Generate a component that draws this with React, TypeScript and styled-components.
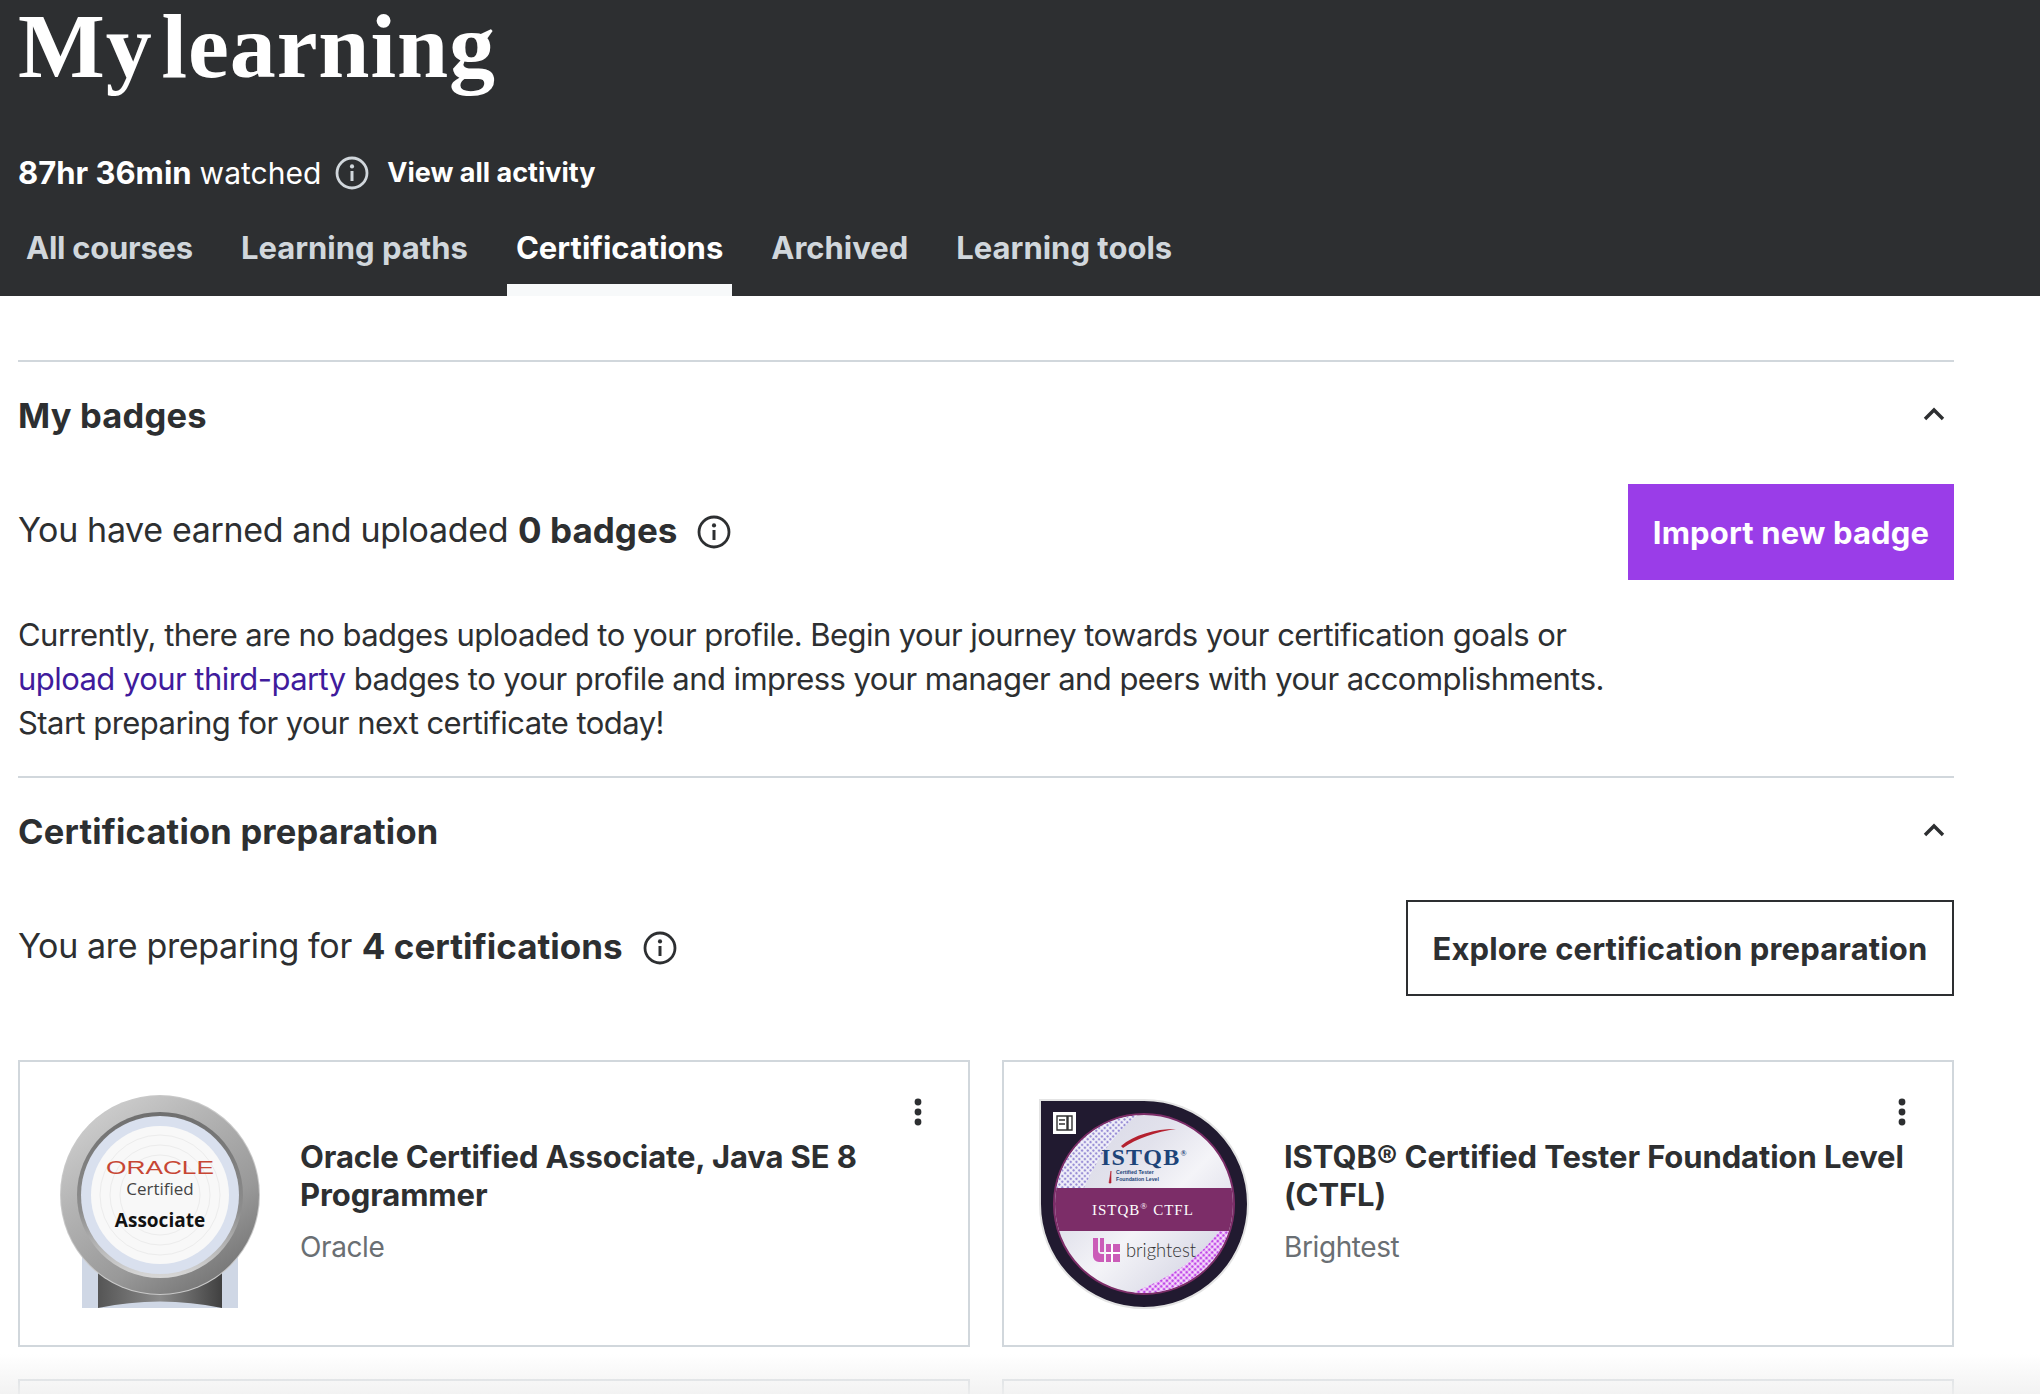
import React from "react";
import styled, { createGlobalStyle } from "styled-components";

const Global = createGlobalStyle`
  html, body { margin: 0; padding: 0; height: 100%; overflow: hidden; background: #fff; }
  body { font-family: Inter, "Liberation Sans", sans-serif; color: #2d2f31; }
  * { box-sizing: border-box; }
`;

const Page = styled.div`height: 1394px; overflow: hidden; position: relative;`;
const Hero = styled.header`background: #2d2f31; height: 296px; padding: 0 18px; color: #fff; display: flex; flex-direction: column;`;
const Title = styled.h1`margin: 0; height: 113px; font: 700 92px/92px "Liberation Serif", serif; letter-spacing: 0.9px; word-spacing: -15px;`;
const Stats = styled.div`margin-top: 43px; height: 34px; display: flex; align-items: center; font-size: 31px; line-height: 34px; color: #fff;`;
const Strong = styled.strong`font-weight: 700;`;
const Watched = styled.span`font-weight: 400; font-size: 30px; margin-left: 8px;`;
const Activity = styled.a`font-size: 27px; font-weight: 700; margin-left: 18px;`;
const Info = styled.svg<{ $gap: number }>`width: 34px; height: 34px; margin-left: ${p => p.$gap}px; flex: none;`;
const Tabs = styled.nav`margin: auto 0 0 -1px; display: flex; gap: 30px;`;
const Tab = styled.a<{ $active?: boolean }>`
  height: 68px; padding: 0 9px; font-size: 31px; font-weight: 700; line-height: 40px;
  color: ${p => (p.$active ? "#fff" : "#d1d7dc")};
  border-bottom: 12px solid ${p => (p.$active ? "#f7f9fa" : "transparent")};
  &:first-child { letter-spacing: -0.25px; }
`;
const Main = styled.main`margin: 0 86px 0 18px; padding-top: 64px;`;
const Section = styled.section`border-top: 2px solid #d1d7dc;`;
const SectionHead = styled.div`height: 122px; padding-bottom: 15px; display: flex; align-items: center; justify-content: space-between;`;
const SectionTitle = styled.h2`margin: 0; font-size: 34.5px; font-weight: 700; line-height: 44px; letter-spacing: 0.2px;`;
const Chevron = styled.svg`width: 24px; height: 24px; margin-right: 8px; margin-top: -5px;`;
const Summary = styled.div`display: flex; align-items: center; justify-content: space-between; height: 96px;`;
const SummaryText = styled.div`display: flex; align-items: center; font-size: 34px; line-height: 44px; letter-spacing: -0.35px;`;
const SummaryLabel = styled.span`display: flex; margin-top: -5px;`;
const SummaryStrong = styled.strong`font-size: 35px; font-weight: 700; letter-spacing: 0; margin-left: 10px;`;
const Primary = styled.button`
  height: 96px; width: 326px; border: 0; background: #9a3de8; color: #fff;
  font: 700 31px Inter, sans-serif; letter-spacing: 0.15px; padding: 0;
`;
const Secondary = styled.button`
  height: 96px; width: 548px; border: 2px solid #2d2f31; background: #fff; color: #2d2f31;
  font: 700 31px Inter, sans-serif; letter-spacing: 0.15px; padding: 0;
`;
const Body = styled.p`margin: 33px 0 0; height: 163px; font-size: 31px; line-height: 44px; letter-spacing: -0.55px;`;
const Link = styled.a`color: #401b9c;`;
const Cards = styled.div`display: grid; grid-template-columns: 1fr 1fr; gap: 32px; margin-top: 64px;`;
const Card = styled.article`
  position: relative; height: 287px; border: 2px solid #d1d7dc; padding: 0 24px 0 30px;
  display: flex; align-items: center; gap: 30px; background: #fff;
`;
const Badge = styled.svg`width: 220px; height: 220px; flex: none;`;
const CardBody = styled.div`display: flex; flex-direction: column; margin-top: -4px;`;
const CardTitle = styled.h3`margin: 0; font-size: 31px; font-weight: 700; line-height: 38px; letter-spacing: -0.1px;`;
const CardSub = styled.div`margin-top: 14px; font-size: 28px; line-height: 38px; letter-spacing: -0.4px; color: #6a6f73;`;
const Dots = styled.svg`position: absolute; right: 45px; top: 34px; width: 10px; height: 32px;`;
const Fade = styled.div`
  position: absolute; left: 0; right: 0; bottom: 0; height: 40px;
  background: linear-gradient(rgba(240,240,240,0), rgba(240,240,240,.85));
`;

const InfoIcon = ({ gap, color = "currentColor" }: { gap: number; color?: string }) => (
  <Info $gap={gap} viewBox="0 0 34 34" fill="none">
    <circle cx="17" cy="17" r="15" stroke={color} strokeWidth="2.8" />
    <circle cx="17" cy="10.4" r="2.1" fill={color} />
    <path d="M17 15v10" stroke={color} strokeWidth="3" />
  </Info>
);

const Up = () => (
  <Chevron viewBox="0 0 24 24" fill="none">
    <path d="M3 18L12 9l9 9" stroke="#2d2f31" strokeWidth="3.4" />
  </Chevron>
);

const More = () => (
  <Dots viewBox="0 0 10 32" fill="#2d2f31">
    <circle cx="5" cy="6" r="3.4" />
    <circle cx="5" cy="16" r="3.4" />
    <circle cx="5" cy="26" r="3.4" />
  </Dots>
);

const OracleBadge = () => (
  <Badge viewBox="0 0 220 220">
    <defs>
      <linearGradient id="silver" x1="0" y1="0" x2="0.7" y2="1">
        <stop offset="0" stopColor="#d8d8d8" />
        <stop offset=".4" stopColor="#b4b4b4" />
        <stop offset=".75" stopColor="#999" />
        <stop offset="1" stopColor="#777" />
      </linearGradient>
      <linearGradient id="silverIn" x1="0" y1="0" x2="0" y2="1">
        <stop offset="0" stopColor="#6f6f6f" />
        <stop offset=".6" stopColor="#8e8e8e" />
        <stop offset="1" stopColor="#d8d8d8" />
      </linearGradient>
      <linearGradient id="base" x1="0" y1="0" x2="1" y2="0">
        <stop offset="0" stopColor="#555" />
        <stop offset=".5" stopColor="#8a8a8a" />
        <stop offset="1" stopColor="#404040" />
      </linearGradient>
    </defs>
    <rect x="32" y="140" width="156" height="74" fill="#cfd7e5" />
    <path d="M48 150H172V214Q110 201 48 214Z" fill="url(#base)" />
    <circle cx="110" cy="101" r="100" fill="#c9c9c9" />
    <circle cx="110" cy="101" r="99" fill="url(#silver)" />
    <circle cx="110" cy="101" r="83" fill="url(#silverIn)" />
    <circle cx="110" cy="101" r="79" fill="#d9e0ee" />
    <circle cx="110" cy="101" r="69" fill="#f8f8f8" />
    <g fill="none" stroke="#ececec" strokeWidth="1">
      <circle cx="110" cy="101" r="60" />
      <circle cx="110" cy="101" r="50" />
      <circle cx="110" cy="101" r="40" />
    </g>
    <text x="110" y="80" textAnchor="middle" fontFamily="Liberation Sans, sans-serif" fontSize="18" textLength="108" lengthAdjust="spacingAndGlyphs" fill="#c74634">ORACLE</text>
    <text x="110" y="101" textAnchor="middle" fontFamily="Open Sans, sans-serif" fontSize="17" fill="#444">Certified</text>
    <text x="110" y="133" textAnchor="middle" fontFamily="Open Sans, sans-serif" fontSize="19" fontWeight="700" fill="#111">Associate</text>
  </Badge>
);

const IstqbBadge = () => (
  <Badge viewBox="0 0 220 220">
    <defs>
      <linearGradient id="foil" x1="0" y1="0" x2="1" y2="1">
        <stop offset="0" stopColor="#d5d5e4" />
        <stop offset=".35" stopColor="#e2e2ec" />
        <stop offset=".55" stopColor="#f4f4f8" />
        <stop offset=".8" stopColor="#dcdce8" />
        <stop offset="1" stopColor="#c9c9de" />
      </linearGradient>
      <pattern id="dotsA" width="4" height="4" patternUnits="userSpaceOnUse" patternTransform="rotate(45)">
        <rect width="4" height="4" fill="#f3f3fa" />
        <circle cx="2" cy="2" r="1.3" fill="#9a8fd6" />
      </pattern>
      <pattern id="dotsB" width="4" height="4" patternUnits="userSpaceOnUse" patternTransform="rotate(45)">
        <rect width="4" height="4" fill="#f8e2fb" />
        <circle cx="2" cy="2" r="1.5" fill="#c048e8" />
      </pattern>
      <clipPath id="disc"><circle cx="110" cy="110" r="89" /></clipPath>
    </defs>
    <path d="M6 6H110A104 104 0 1 1 6 110Z" fill="#211a30" stroke="#e4e4e4" strokeWidth="2" />
    <circle cx="110" cy="110" r="90" fill="url(#foil)" stroke="#7c2d68" strokeWidth="2" />
    <g clipPath="url(#disc)">
      <path d="M20 94V20H105C85 35 65 60 50 94Z" fill="url(#dotsA)" />
      <path d="M200 137V200H95C135 185 165 165 185 137Z" fill="url(#dotsB)" />
      <rect x="18" y="94" width="184" height="43" fill="#7c2d68" />
    </g>
    <path d="M87 52C100 41 120 35 142 35C122 38 103 44 89 54Z" fill="#b4202f" />
    <path d="M75 89L77 77L77 89Z" fill="#b4202f" stroke="#b4202f" strokeWidth=".6" />
    <rect x="19" y="18" width="23" height="22" fill="#fff" />
    <path d="M23 22h10v14h-10zM34 22h4v14h-4zM25 26h6M25 30h6" fill="none" stroke="#333" strokeWidth="1.4" />
    <text x="67" y="71" fontFamily="Liberation Serif, serif" fontSize="24" fontWeight="700" letterSpacing="1.2" fill="#1d4479">ISTQB<tspan fontSize="8" dy="-9">®</tspan></text>
    <text x="82" y="80" fontFamily="Liberation Sans, sans-serif" fontSize="5.2" fontWeight="700" fill="#1d4479">Certified Tester</text>
    <text x="82" y="87" fontFamily="Liberation Sans, sans-serif" fontSize="5.2" fontWeight="700" fill="#1d4479">Foundation Level</text>
    <text x="58" y="121" fontFamily="Liberation Serif, serif" fontSize="15" letterSpacing="1" fill="#fff">ISTQB<tspan fontSize="9" dy="-6">®</tspan><tspan dy="6" dx="5">CTFL</tspan></text>
    <path d="M59 144h5v12a4 4 0 0 0 4 4h2v8h-5a6 6 0 0 1-6-6Z" fill="#cb5cb8" />
    <path d="M66 144h4v14h-4zM72 150h14v18h-14z" fill="#cb5cb8" />
    <path d="M78 150v18M72 159h14" stroke="#fff" strokeWidth="2" />
    <text x="92" y="163" fontFamily="Lato, sans-serif" fontWeight="300" fontSize="20" textLength="70" lengthAdjust="spacingAndGlyphs" fill="#333">brightest</text>
  </Badge>
);

export default function App() {
  return (
    <Page>
      <Global />
      <Hero>
        <Title>My learning</Title>
        <Stats>
          <Strong>87hr 36min</Strong>
          <Watched>watched</Watched>
          <InfoIcon gap={14} color="#d1d7dc" />
          <Activity>View all activity</Activity>
        </Stats>
        <Tabs>
          <Tab>All courses</Tab>
          <Tab>Learning paths</Tab>
          <Tab $active>Certifications</Tab>
          <Tab>Archived</Tab>
          <Tab>Learning tools</Tab>
        </Tabs>
      </Hero>
      <Main>
        <Section>
          <SectionHead>
            <SectionTitle>My badges</SectionTitle>
            <Up />
          </SectionHead>
          <Summary>
            <SummaryText>
              <SummaryLabel>
                You have earned and uploaded
                <SummaryStrong>0 badges</SummaryStrong>
              </SummaryLabel>
              <InfoIcon gap={20} />
            </SummaryText>
            <Primary>Import new badge</Primary>
          </Summary>
          <Body>
            Currently, there are no badges uploaded to your profile. Begin your journey towards your certification goals or
            <br />
            <Link>upload your third-party</Link> badges to your profile and impress your manager and peers with your accomplishments.
            <br />
            Start preparing for your next certificate today!
          </Body>
        </Section>
        <Section>
          <SectionHead>
            <SectionTitle>Certification preparation</SectionTitle>
            <Up />
          </SectionHead>
          <Summary>
            <SummaryText>
              <SummaryLabel>
                You are preparing for
                <SummaryStrong>4 certifications</SummaryStrong>
              </SummaryLabel>
              <InfoIcon gap={20} />
            </SummaryText>
            <Secondary>Explore certification preparation</Secondary>
          </Summary>
          <Cards>
            <Card>
              <OracleBadge />
              <CardBody>
                <CardTitle>Oracle Certified Associate, Java SE 8 Programmer</CardTitle>
                <CardSub>Oracle</CardSub>
              </CardBody>
              <More />
            </Card>
            <Card>
              <IstqbBadge />
              <CardBody>
                <CardTitle>ISTQB® Certified Tester Foundation Level (CTFL)</CardTitle>
                <CardSub>Brightest</CardSub>
              </CardBody>
              <More />
            </Card>
            <Card />
            <Card />
          </Cards>
        </Section>
      </Main>
      <Fade />
    </Page>
  );
}
